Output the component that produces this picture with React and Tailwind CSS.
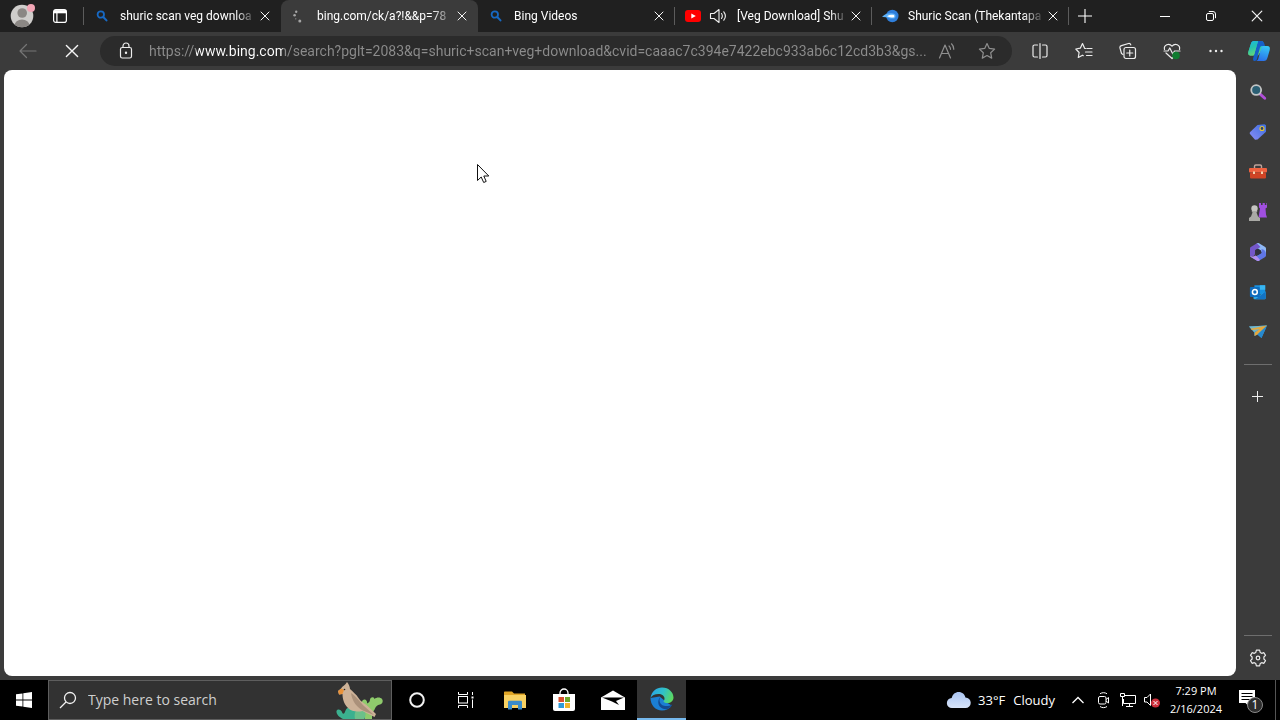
import { useState } from "react";

const URL_TEXT =
  "https://www.bing.com/search?pglt=2083&q=shuric+scan+veg+download&cvid=caaac7c394e7422ebc933ab6c12cd3b3&gs...";

/* ---------- tab icons ---------- */

function BingIcon() {
  return (
    <svg width="14" height="14" viewBox="0 0 14 14" fill="none" stroke="#1769c4">
      <circle cx="5.800" cy="5.500" r="3.200" strokeWidth="1.800" />
      <path d="M8.500 8.200l3 3.200" strokeWidth="2" strokeLinecap="round" />
    </svg>
  );
}

function SpinnerIcon() {
  return (
    <svg width="14" height="14" viewBox="0 0 14 14" fill="#a5a5a5">
      <circle cx="4.200" cy="2.800" r="1.200" />
      <circle cx="2.600" cy="6.200" r="1.300" />
      <circle cx="7.800" cy="12" r="1.500" />
      <circle cx="3.800" cy="9.800" r="0.600" />
    </svg>
  );
}

function YoutubeIcon() {
  return (
    <svg width="16" height="14" viewBox="0 0 16 14">
      <rect y="1" width="16" height="12" rx="3" fill="#f00" />
      <path d="M6.300 4.400v5.200L10.800 7z" fill="#fff" />
    </svg>
  );
}

function StreamIcon() {
  return (
    <svg width="17" height="14" viewBox="0 0 17 14" className="shrink-0">
      <circle cx="10.300" cy="7" r="6.200" fill="#2f7fdc" />
      <path d="M0 8C3 4.500 7 3.800 11 4.400a2.600 2.600 0 0 1 0 5.200C8 9.800 4 7.500 0 8z" fill="#5db0f7" />
      <path d="M5 7.200c2-1.200 4-1.500 6-1.400a1.400 1.400 0 0 1 0 2.800c-2 0-4-.6-6-1.400z" fill="#fff" />
    </svg>
  );
}

function SpeakerIcon() {
  return (
    <svg width="18" height="16" viewBox="0 0 18 16" fill="none" stroke="#eee" strokeWidth="1.100" strokeLinecap="round" strokeLinejoin="round">
      <path d="M1.500 5.500v5H5l5 4v-13l-5 4z" />
      <path d="M12.500 5.500c1 1.500 1 3.500 0 5M14.800 3.800c1.900 2.500 1.900 5.900 0 8.400" />
    </svg>
  );
}

function CloseIcon({ size = 10 }) {
  return (
    <svg width={size} height={size} viewBox="0 0 10 10" stroke="#f5f5f5" strokeLinecap="round">
      <path d="M1 1l8 8M9 1l-8 8" />
    </svg>
  );
}

const tabs = [
  { title: "shuric scan veg downloa", icon: <BingIcon /> },
  { title: "bing.com/ck/a?!&&p=78", icon: <SpinnerIcon />, active: true },
  { title: "Bing Videos", icon: <BingIcon /> },
  { title: "[Veg Download] Shu", icon: <YoutubeIcon />, audio: true },
  { title: "Shuric Scan (Thekantapa", icon: <StreamIcon /> },
];

function Tab({ tab, divider }) {
  return (
    <div
      className={`relative flex h-8 min-w-0 max-w-[197px] flex-1 items-center pl-2.5 pr-2 ${
        tab.active ? "rounded-t-lg bg-[#3b3b3b]" : ""
      }`}
    >
      <span className="flex w-4 shrink-0 justify-center">{tab.icon}</span>
      {tab.audio && (
        <button aria-label="Mute tab" className="ml-2 shrink-0">
          <SpeakerIcon />
        </button>
      )}
      <span className="ml-2.5 min-w-0 flex-1 overflow-hidden whitespace-nowrap text-[12px] leading-4 text-white [mask-image:linear-gradient(to_right,black_84%,transparent)]">
        {tab.title}
      </span>
      <button aria-label="Close tab" className="flex h-4 w-4 shrink-0 items-center justify-center">
        <CloseIcon />
      </button>
      {divider && <span className="absolute right-0 top-[7px] h-[18px] w-px bg-[#5c5c5c]" />}
    </div>
  );
}

function TitleBar() {
  return (
    <header className="flex h-8 items-center bg-[#202020] font-['Roboto',sans-serif]">
      <button aria-label="Profile" className="ml-2.5 shrink-0">
        <svg width="26" height="28" viewBox="0 0 26 28">
          <clipPath id="face">
            <circle cx="12" cy="14" r="11.300" />
          </clipPath>
          <circle cx="12" cy="14" r="11.300" fill="#cfcdcb" />
          <g clipPath="url(#face)" fill="#8b8784">
            <circle cx="12.200" cy="11" r="4.800" />
            <ellipse cx="12" cy="23.500" rx="7.500" ry="6" />
          </g>
          <circle cx="21" cy="6" r="4" fill="#f3a6b6" />
        </svg>
      </button>
      <button aria-label="Tab actions" className="ml-4 shrink-0">
        <svg width="16" height="16" viewBox="0 0 16 16" fill="none" stroke="#fff" strokeWidth="1.200">
          <rect x="1.600" y="1.600" width="12.800" height="12.800" rx="2.200" />
          <path d="M2 3.700h12" strokeWidth="3.200" />
          <path d="M4.900 5v9" />
        </svg>
      </button>
      <span className="ml-[15px] h-[18px] w-px shrink-0 bg-[#5c5c5c]" />
      <nav className="flex min-w-0 flex-1">
        {tabs.map((tab, i) => (
          <Tab key={i} tab={tab} divider={i > 1} />
        ))}
        <button aria-label="New tab" className="flex h-8 w-8 items-center justify-center">
          <svg width="14" height="14" viewBox="0 0 14 14" stroke="#fff" strokeWidth="1.100">
            <path d="M7 0v14M0 7h14" />
          </svg>
        </button>
      </nav>
      <div className="flex shrink-0">
        <button aria-label="Minimize" className="flex h-8 w-[46px] items-center justify-center">
          <svg width="10" height="10" viewBox="0 0 10 10" stroke="#fff">
            <path d="M0 5.500h10" />
          </svg>
        </button>
        <button aria-label="Restore" className="flex h-8 w-[46px] items-center justify-center">
          <svg width="12" height="12" viewBox="0 0 12 12" fill="none" stroke="#fff">
            <rect x="1.500" y="3.500" width="7" height="7" rx="1.500" />
            <path d="M3.800 1.500H8A2.500 2.500 0 0 1 10.500 4v4.200" />
          </svg>
        </button>
        <button aria-label="Close" className="flex h-8 w-[46px] items-center justify-center">
          <CloseIcon size={12} />
        </button>
      </div>
    </header>
  );
}

/* ---------- toolbar ---------- */

function StrokeIcon({ children, size = 18, color = "#ececec" }) {
  return (
    <svg
      width={size}
      height={size}
      viewBox="0 0 18 18"
      fill="none"
      stroke={color}
      strokeWidth="1.200"
      strokeLinecap="round"
      strokeLinejoin="round"
    >
      {children}
    </svg>
  );
}

function CopilotIcon() {
  return (
    <svg width="24" height="22" viewBox="0 0 26 24">
      <defs>
        <linearGradient id="cpA" x1="0" y1="0" x2="0.300" y2="1">
          <stop offset="0" stopColor="#1cb5e8" />
          <stop offset="0.500" stopColor="#25c3b0" />
          <stop offset="1" stopColor="#5fd67c" />
        </linearGradient>
        <linearGradient id="cpB" x1="0.600" y1="0" x2="0.300" y2="1">
          <stop offset="0" stopColor="#35c5f5" />
          <stop offset="1" stopColor="#2a6de8" />
        </linearGradient>
      </defs>
      <path d="M7.500 1h8c1.800 0 2.300 1 2 2.500l-2.500 9-3 4.500H4.500C1.500 17 .8 15 1.500 12.500L4.200 4C4.800 2 5.800 1 7.500 1z" fill="url(#cpA)" />
      <path d="M12 1h4c1.500 0 2.500 1.500 3 3.500l.5 2h-3c-1.500 0-2 .5-2.500 2L11 20c-.5 1.800-1.200 3-3 3-1.500 0-1.800-2-1-4.500z" fill="#1560c8" />
      <path d="M7.500 1H12L8 15c-.5 1.400-1.200 2-2.500 2h-1C1.500 17 .8 15 1.500 12.500L4.200 4C4.800 2 5.800 1 7.500 1z" fill="url(#cpA)" />
      <path d="M17.500 6.500H22c2.500 0 3.300 1.800 2.700 4.300l-2.300 8c-.8 2.800-2 4.200-4.200 4.200H9.500c1.500 0 2.300-1 2.900-3l3-11.500c.4-1.400 1-2 2.100-2z" fill="url(#cpB)" />
    </svg>
  );
}

const toolbarButtons = [
  {
    label: "Split screen",
    icon: (
      <StrokeIcon>
        <path d="M6.500 3H3.500A1.500 1.500 0 0 0 2 4.500v9A1.500 1.500 0 0 0 3.500 15h3M11.500 3h3A1.500 1.500 0 0 1 16 4.500v9a1.500 1.500 0 0 1-1.500 1.500h-3M9 1.500v15" />
      </StrokeIcon>
    ),
  },
  {
    label: "Favorites",
    icon: (
      <StrokeIcon>
        <path d="M10.500 6.500L9.600 6.300 7.500 1.500 5.300 6.200.8 7l3.300 3.500-.8 5 4.200-2.300.8.500M11.800 6.500H17M10.500 10H17M11.500 13.500H17" />
      </StrokeIcon>
    ),
  },
  {
    label: "Collections",
    icon: (
      <StrokeIcon>
        <path d="M4 12.500l-1.500-1L1 6a2 2 0 0 1 1.400-2.400L9.500 1.500a2 2 0 0 1 2.300 1.400" />
        <rect x="5" y="5.500" width="11.500" height="11" rx="2" />
        <path d="M10.750 8v6M7.750 11h6" />
      </StrokeIcon>
    ),
  },
  {
    label: "Browser essentials",
    icon: (
      <StrokeIcon>
        <path d="M1.500 7.500C.5 3 6 .5 9 4.200 12 .5 17.500 3 16.500 7.500M3 11l6 5.500 2-2M1 9h4l1.800-3 3 6L11.500 9H17" />
        <circle cx="13" cy="13.500" r="3.800" fill="#107c30" stroke="none" />
      </StrokeIcon>
    ),
  },
  {
    label: "Settings and more",
    icon: (
      <svg width="16" height="4" viewBox="0 0 16 4" fill="#eee">
        <circle cx="2.500" cy="2" r="1.200" />
        <circle cx="8" cy="2" r="1.200" />
        <circle cx="13.500" cy="2" r="1.200" />
      </svg>
    ),
  },
];

function Toolbar() {
  const [address, setAddress] = useState(URL_TEXT);

  return (
    <div className="flex h-[38px] items-center bg-[#3b3b3b] pl-1.5 font-['Roboto',sans-serif]">
      <button aria-label="Back" className="flex w-11 shrink-0 justify-center">
        <StrokeIcon color="#767676">
          <path d="M17 9H1.500M7.500 2.500L1 9l6.500 6.500" />
        </StrokeIcon>
      </button>
      <button aria-label="Stop" className="flex w-11 shrink-0 justify-center">
        <CloseIcon size={14} />
      </button>
      <div className="ml-1.5 flex h-[30px] min-w-0 flex-1 items-center rounded-full bg-[#2b2b2b] pl-[17px] pr-4">
        <button aria-label="View site information" className="shrink-0">
          <StrokeIcon>
            <rect x="3.500" y="5.500" width="11" height="10.500" rx="1.800" />
            <path d="M6 5.500V4a3 3 0 0 1 6 0v1.500" />
            <circle cx="9" cy="10.800" r="0.600" fill="#fff" />
          </StrokeIcon>
        </button>
        {/* the host part is painted brighter than the rest of the address */}
        <input
          type="text"
          aria-label="Address bar"
          value={address}
          onChange={(e) => setAddress(e.target.value)}
          className="ml-3.5 min-w-0 flex-1 bg-[linear-gradient(to_right,#8c8c8c_47px,#ffffff_47px,#ffffff_134px,#8c8c8c_134px)] bg-clip-text text-[14px] leading-5 text-transparent outline-none"
        />
        <button aria-label="Read aloud" className="ml-2 shrink-0">
          <StrokeIcon color="#8f8f8f">
            <path d="M1.500 16L7 3l5.500 13M3.500 11.500h7M11 4c1 .8 1.500 2 1.500 3.300M13.500 1.800c1.500 1.400 2.300 3.300 2.300 5.500" />
          </StrokeIcon>
        </button>
        <button aria-label="Add to favorites" className="ml-[22px] shrink-0">
          <StrokeIcon color="#8f8f8f">
            <path d="M9 1.500l2.300 4.900 5.300.7-3.900 3.700 1 5.300L9 13.500l-4.700 2.600 1-5.300L1.400 7.100l5.300-.7z" />
          </StrokeIcon>
        </button>
      </div>
      <div className="ml-1.5 flex shrink-0">
        {toolbarButtons.map((b) => (
          <button key={b.label} aria-label={b.label} className="flex h-8 w-11 items-center justify-center">
            {b.icon}
          </button>
        ))}
        <button aria-label="Copilot" className="flex h-8 w-[42px] items-center justify-center">
          <CopilotIcon />
        </button>
      </div>
    </div>
  );
}

/* ---------- sidebar ---------- */

const sidebarApps = [
  {
    label: "Search",
    icon: (
      <svg width="18" height="18" viewBox="0 0 20 20">
        <path d="M11.500 11.500l6 5.500" stroke="#b04fd8" strokeWidth="3.200" strokeLinecap="round" />
        <circle cx="8" cy="7.800" r="5.500" fill="#2b5f74" stroke="#c2c4c4" strokeWidth="2" />
      </svg>
    ),
  },
  {
    label: "Shopping",
    icon: (
      <svg width="20" height="20" viewBox="0 0 20 20">
        <defs>
          <linearGradient id="tag" x1="1" y1="0" x2="0" y2="1">
            <stop offset="0" stopColor="#3b6fe0" />
            <stop offset="1" stopColor="#8b8cf5" />
          </linearGradient>
        </defs>
        <path d="M9.500 3l7-.8 1.500 1v6.500L9.500 17.500 7 17.800 2 12c-.5-.8-.4-1.500.2-2.100z" fill="url(#tag)" />
        <circle cx="14" cy="6.500" r="2" fill="#2b3d70" stroke="#e3c531" strokeWidth="1.200" />
      </svg>
    ),
  },
  {
    label: "Tools",
    icon: (
      <svg width="20" height="20" viewBox="0 0 20 20">
        <path d="M6.500 6V4.300C6.500 3.500 7 3 7.800 3h4.400c.8 0 1.300.5 1.300 1.300V6" fill="none" stroke="#bfa39b" strokeWidth="1.400" />
        <rect x="1" y="6" width="18" height="4.500" rx="1" fill="#ef6240" />
        <rect x="2" y="10.500" width="16" height="6" rx="1" fill="#cf4425" />
        <path d="M5 9.500h2V12H5zM13 9.500h2V12h-2z" fill="#f1d3b0" />
      </svg>
    ),
  },
  {
    label: "Games",
    icon: (
      <svg width="20" height="20" viewBox="0 0 20 20">
        <path d="M11 1h2v2h1.600V1h2.200v2h1.600V1H19v4.500l-1.500 1 .5 6 1 3h-8.500l1.500-9-1-1z" fill="#a04fe0" />
        <circle cx="6.500" cy="6.500" r="3.200" fill="#c4c4c0" />
        <path d="M3.500 9h6l-1 1.500 1.500 4 2 1.500V19H1v-3l2-1.500 1.500-4z" fill="#a9a9a5" />
      </svg>
    ),
  },
  {
    label: "Microsoft 365",
    icon: (
      <svg width="20" height="20" viewBox="0 0 20 20">
        <path d="M9 1.300c.6-.4 1.400-.4 2 0l6.200 3.800c.6.400.8.900.8 1.500v5.900L12.500 9 7 5z" fill="#8fb8f5" />
        <path d="M9 1.300L2.800 5.100c-.5.300-.8.800-.8 1.500v7.200c2 1.200 5 .5 5-2.300V8.300L12.500 5z" fill="#7457c9" />
        <path d="M18 12v1.500c0 .6-.3 1.100-.8 1.400L11 18.700c-.6.400-1.400.4-2 0L3 15c3 .5 4.500-.5 6-1.300l4.500-2.700V7c2.500.5 4.500 2 4.500 5z" fill="#5f76e6" />
        <path d="M2 13.800c2 1.200 4 .7 5.500-.2l1.500 1 3 3.500-1 .6c-.6.400-1.400.4-2 0l-6.200-3.800c-.4-.2-.7-.6-.8-1.100z" fill="#b48ff0" />
        <path d="M7.500 8L10 6.600 13 8.500v2.700L10 13l-2.500-1.500z" fill="#30313f" />
      </svg>
    ),
  },
  {
    label: "Outlook",
    icon: (
      <svg width="18" height="20" viewBox="0 0 20 20">
        <path d="M6 2.500h12v10H6z" fill="#1790df" />
        <path d="M12 2.500h6v5h-6z" fill="#38b6f2" />
        <path d="M5 9.500l6.500 4 7-4V17c0 .6-.4 1-1 1H6c-.6 0-1-.4-1-1z" fill="#2aa9e8" />
        <path d="M18.500 9.500L7 18h10.500c.6 0 1-.4 1-1z" fill="#1273c4" />
        <rect x="1" y="4.500" width="11" height="11" rx="1" fill="#0f6cbd" />
        <circle cx="6.500" cy="10" r="2.700" fill="none" stroke="#fff" strokeWidth="1.700" />
      </svg>
    ),
  },
  {
    label: "Drop",
    icon: (
      <svg width="20" height="20" viewBox="0 0 20 20">
        <path d="M1 4.500L19 3.500 13.500 16 9.500 12.500 6.500 14 6 10z" fill="#3d9edb" />
        <path d="M1 4.500L19 3.500 6 10z" fill="#73b7c9" />
        <path d="M19 3.500L9.500 12.500 6.500 14l.3-3.500 5-3.500L4 8 2.500 6.800z" fill="#e5a83d" />
        <path d="M19 3.500L13.500 16l-4-3.500z" fill="#2689cf" />
      </svg>
    ),
  },
];

function Sidebar() {
  return (
    <aside className="flex w-11 shrink-0 flex-col items-center pt-0.5">
      {sidebarApps.map((app) => (
        <button key={app.label} aria-label={app.label} className="flex h-10 w-10 items-center justify-center">
          {app.icon}
        </button>
      ))}
      <hr className="mt-3 w-7 border-[#6e6e6e]" />
      <button aria-label="Customize" className="mt-3 flex h-10 w-10 items-center justify-center">
        <svg width="12" height="12" viewBox="0 0 12 12" stroke="#eee">
          <path d="M5.500 0v11M0 5.500h11" />
        </svg>
      </button>
      <hr className="mt-auto w-7 border-[#6e6e6e]" />
      <button aria-label="Settings" className="mb-0.5 mt-0.5 flex h-10 w-10 items-center justify-center">
        <StrokeIcon>
          <path d="M7.400 1.200h3.200l.6 2.200 1.500.9 2.200-.6 1.600 2.700L14.900 8v2l1.600 1.600-1.600 2.700-2.200-.6-1.500.9-.6 2.200H7.400l-.6-2.200-1.500-.9-2.200.6-1.600-2.700L3.100 10V8L1.500 6.400l1.600-2.700 2.200.6 1.500-.9z" />
          <circle cx="9" cy="9" r="1.800" />
        </StrokeIcon>
      </button>
    </aside>
  );
}

/* ---------- taskbar ---------- */

function BirdArt() {
  return (
    <svg width="48" height="38" viewBox="0 0 48 38">
      <path d="M30 38c-2-5-3-9-2-14-2-2-1-5 1-5.500 2-.5 3.500 1.500 3 4 2-1 3-2 3-4 .5-2.500 4-3 4.500-.5 2-2 6-2 7.500 0s.5 5-2 5.500c-3 .5-4 2-5 4-1 2.500-3 3.500-3 10.500z" fill="#8fcb6c" />
      <path d="M8 38c-4-2-7-5-6.500-8C2 27.500 6 28 7 31c.5 2 1.500 2 2.500 1 1-2 1-4 3-5 3-1 14-1 16 1 2 3 2 7 1 10z" fill="#3bb08f" />
      <path d="M20 38c-1-5 0-9 4-10l6 2c1 3 0 6-1 8z" fill="#6cc08a" />
      <path d="M12 1c1.500 2 3 4.500 3 7 3 3 6 5 8.500 9 2 3.500 5 5 8 7l9.500 9-1.500 3-12-6c-5 1-10.500 1-14.500-3C8.500 22.500 7.500 17 7.500 13L4 13.500 3 10l3-2.500C7.500 5 10.500 4 12 1z" fill="#cdb298" />
      <path d="M16 12c5 3 9 9 13 13l10 9-10-4c-7-3-12-10-13-18z" fill="#ab917a" />
      <path d="M3 10l3.500-2.500L9 9l-1.500 4L4 13.500z" fill="#e8923a" />
      <circle cx="9.500" cy="8.500" r="0.800" fill="#2c221a" />
    </svg>
  );
}

const pinnedApps = [
  {
    label: "Cortana",
    icon: (
      <svg width="18" height="18" viewBox="0 0 18 18" fill="none" stroke="#f2f2f2" strokeWidth="2">
        <circle cx="9" cy="9" r="6.800" />
      </svg>
    ),
  },
  {
    label: "Task View",
    icon: (
      <svg width="18" height="16" viewBox="0 0 18 16" fill="none" stroke="#fff">
        <path d="M1.500 0v2.500h9V0M1.500 16v-2.500h9V16" />
        <rect x="1.500" y="4.500" width="9" height="6.500" />
        <path d="M15.500 0v3M15.500 7.500V16" />
        <path d="M14.500 5.500h2" strokeWidth="2" />
      </svg>
    ),
  },
  {
    label: "File Explorer",
    icon: (
      <svg width="22" height="19" viewBox="0 0 22 19">
        <path d="M0 1.500C0 .7.500.500 1 .500h7l2 2h11v5H0z" fill="#e0a526" />
        <path d="M0 4h22v13H0z" fill="#f7d163" />
        <path d="M4 18.500V11c0-.8.600-1.200 1.200-1.200h11.600c.6 0 1.200.4 1.200 1.200v7.500h-4V14H8v4.500z" fill="#3a8ccb" />
      </svg>
    ),
  },
  {
    label: "Microsoft Store",
    icon: (
      <svg width="24" height="24" viewBox="0 0 24 24">
        <path d="M8 7V5a4 4 0 0 1 8 0v2" fill="none" stroke="#fff" strokeWidth="1.300" />
        <path d="M1 6h22v15a2 2 0 0 1-2 2H3a2 2 0 0 1-2-2z" fill="#fff" />
        <path d="M6.500 9H12v5H6.500z" fill="#d8502f" />
        <path d="M13 9h5v5h-5z" fill="#6fa82a" />
        <path d="M6.500 15H12v5H6.500z" fill="#2f9bd8" />
        <path d="M13 15h5v5h-5z" fill="#f0b429" />
      </svg>
    ),
  },
  {
    label: "Mail",
    icon: (
      <svg width="24" height="20" viewBox="0 0 24 20">
        <path d="M0 7.500L12 .5l12 7V20H0z" fill="#fff" />
        <path d="M1 7.500h22l-8 3.500 3 4-7-3.500z" fill="#000" />
      </svg>
    ),
  },
  {
    label: "Microsoft Edge",
    active: true,
    icon: (
      <svg width="24" height="24" viewBox="0 0 24 24">
        <defs>
          <linearGradient id="edgeTop" x1="0" y1="0.300" x2="1" y2="0.600">
            <stop offset="0" stopColor="#2aa5e8" />
            <stop offset="0.500" stopColor="#2fc0c9" />
            <stop offset="1" stopColor="#5ed95c" />
          </linearGradient>
        </defs>
        <path d="M.5 11c0 7 5 12.500 11.500 12.500 4 0 7.500-1.800 9.700-5l-5-3-7-6z" fill="#1b7fd4" />
        <path d="M.5 11C1.500 4.500 6.500.5 12 .5 19 .5 23.500 5.500 23.500 10.500c0 3.500-2.800 5.500-6 5.500-2.500 0-4-.8-4-1.600 0-.7 1-1 1-2.900 0-2.600-2.600-4.500-6-4.500-3.800 0-6.500 1.500-8 4z" fill="url(#edgeTop)" />
        <path d="M10.500 10c-2 3-1 7.500 3.500 8.800 3 .8 6 0 7.700-1.300.4-.3.700 0 .4.500-1 1.500-2.300 2.800-3.800 3.700-4 1.500-9.300-.7-10-5.700-.3-2.500.7-4.800 2.200-6z" fill="#134a91" />
      </svg>
    ),
  },
];

function Tray() {
  return (
    <div className="ml-auto flex shrink-0 items-center">
      <button className="flex items-center text-[13px] leading-5 text-white">
        <svg width="26" height="18" viewBox="0 0 26 18" className="mr-1.5">
          <defs>
            <linearGradient id="cloud" x1="0" y1="0" x2="0" y2="1">
              <stop offset="0" stopColor="#a9c4f2" />
              <stop offset="1" stopColor="#d7e3f8" />
            </linearGradient>
          </defs>
          <path d="M6 17a5 5 0 0 1-.3-10C6.500 3.300 9.300 1 12.700 1c3.500 0 6 2.300 6.700 5.400A5.300 5.300 0 0 1 19.500 17z" fill="url(#cloud)" />
        </svg>
        <span>33°F</span>
        <span className="ml-2">Cloudy</span>
      </button>
      <button aria-label="Show hidden icons" className="ml-4">
        <svg width="14" height="8" viewBox="0 0 14 8" fill="none" stroke="#fff" strokeWidth="1.300">
          <path d="M1.500 7L7 1.500 12.500 7" />
        </svg>
      </button>
      <button aria-label="Meet Now" className="ml-3">
        <svg width="14" height="18" viewBox="0 0 14 18" fill="none" stroke="#fff">
          <rect x="1.500" y="5.500" width="7.500" height="7.500" rx="1.500" />
          <path d="M9 8.500l2.500-2V12L9 10M3 2.800c2-1.500 5-1.500 7 0M3 15.500c2 1.500 5 1.500 7 0" />
        </svg>
      </button>
      <button aria-label="Network" className="ml-2">
        <svg width="18" height="16" viewBox="0 0 18 16" fill="none" stroke="#fff">
          <path d="M6 3.500h10.500v8h-12V7M10.500 11.500v3M7 14.500h7" />
          <path d="M1.500 1.500h4v3h-4zM3.500 4.500V14" />
        </svg>
      </button>
      <button aria-label="Volume muted" className="ml-1.5">
        <svg width="18" height="16" viewBox="0 0 18 16" fill="none" stroke="#fff">
          <path d="M1.500 5.500V10H4l3.500 3.500V2L4 5.500z" />
          <circle cx="12.500" cy="11" r="4.500" fill="#cf2f3c" stroke="none" />
          <path d="M10.500 9l4 4M14.500 9l-4 4" />
        </svg>
      </button>
      <button className="ml-2 flex w-[54px] flex-col items-center whitespace-nowrap text-[11px] leading-[18px] text-white">
        <span>7:29 PM</span>
        <span>2/16/2024</span>
      </button>
      <button aria-label="Notifications" className="relative ml-4 mr-3">
        <svg width="24" height="26" viewBox="0 0 24 26">
          <path d="M0 3h16v13h-4.500v5L6.500 16H0z" fill="#fff" />
          <path d="M2.500 6.500h11M2.500 9.500h11M2.500 12.500h8" stroke="#000" />
        </svg>
        <span className="absolute bottom-0 right-0 flex h-4 w-4 items-center justify-center rounded-full border border-[#8a8a8a] bg-[#2d2d2d] text-[12px] leading-3 text-white">
          1
        </span>
      </button>
      <span className="mr-1 h-10 w-px bg-[#555555]" />
    </div>
  );
}

function Taskbar() {
  return (
    <footer className="flex h-10 items-center bg-black">
      <button aria-label="Start" className="flex h-10 w-12 shrink-0 items-center justify-center">
        <svg width="16" height="16" viewBox="0 0 16 16" fill="#fff">
          <path d="M0 2.300l6.500-.9v6.200H0zM7.300 1.300L16 0v7.600H7.300zM0 8.400h6.500v6.200L0 13.700zM7.300 8.400H16V16l-8.700-1.300z" />
        </svg>
      </button>
      <label className="flex h-10 w-[344px] items-center border border-[#5e5e5e] bg-[#323232] pl-2.5 pr-2">
        <svg width="18" height="18" viewBox="0 0 18 18" fill="none" stroke="#f2f2f2" strokeWidth="1.300">
          <circle cx="11" cy="7" r="5.500" />
          <path d="M7 11l-6 6" />
        </svg>
        <input
          type="text"
          aria-label="Search"
          placeholder="Type here to search"
          className="ml-[11px] min-w-0 flex-1 bg-transparent text-[14px] leading-5 text-white outline-none placeholder:text-[#cfcfcf]"
        />
        <BirdArt />
      </label>
      {pinnedApps.map((app) => (
        <button
          key={app.label}
          aria-label={app.label}
          className={`flex h-10 w-[49px] shrink-0 items-center justify-center ${
            app.active ? "border-b-2 border-[#76b9ed] bg-[#333333]" : ""
          }`}
        >
          {app.icon}
        </button>
      ))}
      <Tray />
    </footer>
  );
}

export default function App() {
  return (
    <div className="relative flex min-h-screen flex-col bg-[#3b3b3b] font-['Open_Sans','Noto_Sans',sans-serif]">
      <TitleBar />
      <Toolbar />
      <div className="flex flex-1">
        <main className="mb-1 ml-1 flex-1 rounded-lg bg-white" />
        <Sidebar />
      </div>
      <Taskbar />

      {/* mouse pointer */}
      <svg width="13" height="20" viewBox="0 0 13 20" className="pointer-events-none absolute left-[477px] top-[164px]">
        <path d="M.5.500v16l3.700-3.500 2.500 5.500 2.500-1.100-2.400-5.400h5z" fill="#fff" stroke="#111" />
      </svg>
    </div>
  );
}
